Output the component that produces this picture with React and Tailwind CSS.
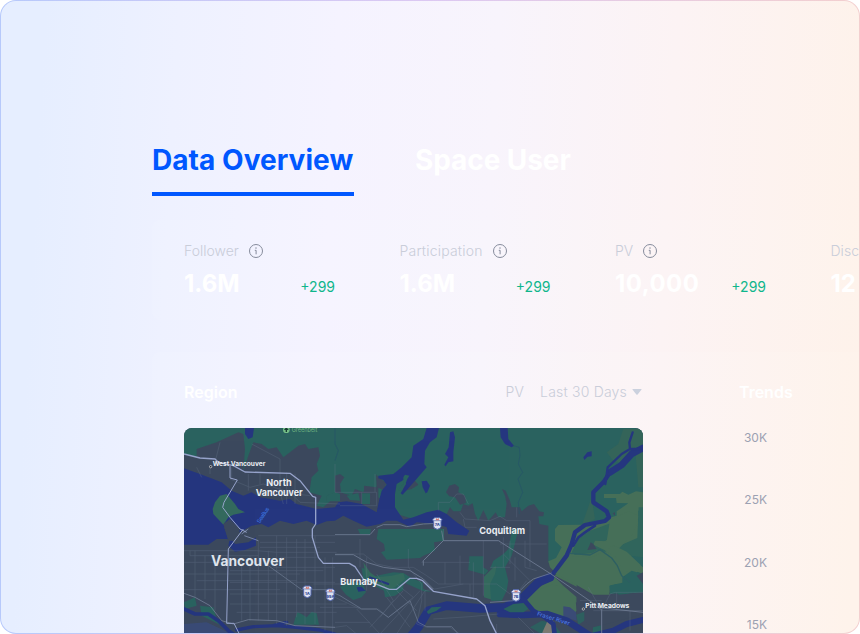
import React from "react";

function InfoIcon() {
  return (
    <svg width="16" height="16" viewBox="0 0 16 16" fill="none" className="shrink-0">
      <circle cx="8" cy="8" r="6.5" stroke="#868c9c" strokeWidth="1" />
      <path d="M6.8 7.3h1.3v4" stroke="#868c9c" strokeWidth="1" />
      <rect x="7.4" y="4.4" width="1.2" height="1.3" fill="#868c9c" />
    </svg>
  );
}

function Stat({ label, value, delta, labelClass = "tracking-[0.05px]", valueClass = "" }) {
  return (
    <div className="w-[215.5px] shrink-0">
      <div className="flex h-5 items-center gap-[9px]">
        <span className={`text-[14px] leading-5 font-light text-[#c9cdd9] ${labelClass}`}>{label}</span>
        {delta && <InfoIcon />}
      </div>
      <div className="mt-[7px] flex w-[151px] items-end justify-between">
        <span className={`text-[24px] leading-8 font-bold text-white ${valueClass}`}>{value}</span>
        {delta && <span className="mb-[3px] text-[14px] leading-5 text-[#10b68b]">{delta}</span>}
      </div>
    </div>
  );
}

function Shield({ x, y, label }) {
  return (
    <g transform={`translate(${x} ${y})`}>
      <path d="M-14 -11L-8 -17H8L14 -11L11 -5V10Q11 15 0 18Q-11 15 -11 10V-5Z" fill="#dfe3f1" stroke="#5367ad" strokeWidth="3" />
      <path d="M-12 -8H12" stroke="#5367ad" strokeWidth="2" />
      <path d="M-5 -9L-3 -16L0 -12L4 -16L5 -9Z" fill="#cf7770" />
      <text x="0" y="9" textAnchor="middle" fontSize="12" fontWeight="800" fill="#344b95">{label}</text>
    </g>
  );
}

const localRoads = [
  "M12 380H230L290 385H470", "M30 380V395H235", "M12 415H150", "M12 450H360", "M50 470H350", "M12 497H300",
  "M45 380V520", "M75 395V525", "M105 415V560", "M185 400V590", "M210 395V590", "M235 350V590", "M265 380V590",
  "M290 335V600", "M320 340V605", "M350 345V580", "M375 345V600", "M405 335V600", "M435 400V620", "M458 400V630",
  "M150 440H430", "M150 475H465", "M150 510H360", "M150 540H500", "M170 565H470", "M235 335H465", "M240 355H465", "M240 370H420",
  "M300 400H410", "M280 430H465", "M400 480H530", "M420 550H540", "M465 595H570",
  "M465 120V205M465 205H590V245H480", "M585 205V150", "M545 205V240",
  "M50 130L65 160M90 125V150M120 55L105 115M155 130V165M215 60L300 105V205L310 240M320 145V240M345 150V240",
  "M150 165L210 190L250 180L330 205L360 235L480 240", "M205 150V200M240 150V180M260 200L390 215",
  "M465 390H550L590 420L640 430H700L740 455L775 480", "M685 375V430L725 480V530", "M725 415H870", "M725 415L770 370L790 350V315",
  "M840 395V480M795 415V480M910 350V515M880 415V520M870 480V520", "M775 480H950L990 510", "M790 350H930",
  "M540 345V430M560 400V500M590 450L640 530L600 580", "M465 520L540 555H595L625 580L700 520L650 480",
  "M570 610L670 500M600 630L720 500M650 630L735 500M530 555L600 630M620 520L690 610M650 500L710 560",
  "M465 610L500 605L530 630M725 530L710 600L740 610H810L840 630M760 585L870 578L955 570", "M735 560V500L850 480",
  "M775 260V235H810L830 210H850L865 240M840 265L855 285L930 290M850 285L855 310H890",
  "M930 290L960 277L980 290H1050V315M1010 250V280M970 340V430M990 350V420M1035 350V430L1070 440M1050 315V430M1005 400V470",
  "M930 350H960M960 360H1100M970 390L1050 470M930 430H990M950 600V630M1015 580L1065 630M1020 495L1040 470",
  "M1265 560L1290 510L1305 505H1389M1265 560V630M1225 490L1265 560H1389M1240 560H1389M1310 505V560M1350 560V620M1200 530H1265",
];

function RegionMap() {
  return (
    <svg
      viewBox="12 12 1377 618"
      preserveAspectRatio="none"
      className="block h-[206px] w-[459px] rounded-t-[8px] font-['Inter',sans-serif]"
    >
      <rect x="12" y="12" width="1377" height="618" fill="#3c495d" />

      {/* northern forest */}
      <path
        fill="#2a625f"
        d="M12 12H1389V450L1370 505L1320 515L1280 480L1230 420L1130 445L1105 415V305L1078 300L1075 277L1090 277L1092 265L1078 262L1062 240L1045 245L1025 262L1020 250H995L990 230L977 200L966 195L975 215L980 240L975 280H955L947 265L925 290L910 258L895 290L885 270L878 238L865 245L850 240L842 262H820L810 250L795 280L780 265L700 285L650 270L595 220V175L585 200L555 190L550 205L525 195L515 215L480 205L430 250L410 245L425 215L388 205L395 160L415 140L410 120L420 95L415 70L385 75L375 60L355 65L330 85L310 100L290 70L265 75L245 60L220 55L205 95L190 140L195 75L190 30L175 25L110 55L50 75V100L12 90Z"
      />
      <path
        fill="#3c495d"
        d="M798 205L808 185L825 180L837 190L835 205L855 215L858 237L840 242L825 220L808 217ZM465 155L480 150L493 160L480 180L483 205L465 210ZM552 185L590 190V205L575 210L572 245H545L552 210ZM588 152L610 170L620 178L610 198L590 190ZM665 190L705 170L715 182L695 195L675 200Z"
      />
      <path fill="#2a625f" d="M546 208H570V240H546ZM500 215L535 207L540 230L510 228ZM440 215L465 205L480 210V232H440Z" />

      {/* inland parks */}
      <path fill="#2a625f" d="M595 315H792V350L762 355L765 380L730 395L720 402L620 407L603 385L615 380L612 360L590 345ZM533 315H573L570 332L540 330ZM868 397H910V430L925 440L915 452L865 438ZM345 585L352 565L365 570L380 580L395 563L410 568L417 602H340ZM12 535L45 520L50 545L15 555ZM60 545L100 550L110 585L125 605L65 575ZM480 490L505 470L550 480L558 505L545 520L520 528L498 512ZM545 432L560 435L575 460L590 455L640 445L670 447L700 465L728 475L730 495L755 503L730 502L670 475L670 498L645 515L615 520L612 500L590 488L550 465Z" />
      <path fill="#34695d" d="M550 415L570 445L590 460L635 455L670 447L675 465L645 490L625 497L560 470ZM912 458L950 420L945 530L912 520Z" />
      <path fill="#29635f" d="M997 315H1015L1003 365L995 395L975 430L985 470L980 500L965 530H933L930 480L945 450L950 425L930 435L940 410L970 390L985 375ZM1240 590H1262V630H1238Z" />

      {/* farmland */}
      <path
        fill="#466f58"
        d="M1125 315L1135 303L1205 302L1265 290L1285 282L1310 275V262L1345 238L1310 237L1308 222H1272V210H1320L1327 203L1345 212L1368 202L1389 205V260H1375V360L1365 385L1350 400L1389 430V450L1350 435L1365 480H1290L1288 505H1240L1215 490L1190 480L1190 535L1120 545L1045 545L1040 520L1060 505L1130 450L1110 430L1105 412L1128 402L1145 370L1125 350Z"
      />
      <path fill="#346459" d="M1330 15H1389V190H1375L1365 70L1340 120L1300 110L1280 85L1315 60ZM1235 220L1245 285L1205 305Z" />
      {/* wooded strip between the river and the fields */}
      <path fill="#30655c" d="M1175 385L1195 345L1230 320L1285 300L1300 295L1285 345L1262 360L1280 385L1252 378L1235 388L1185 392Z" />
      <path fill="#30655c" d="M1330 360L1372 342L1376 250H1389V400L1350 395L1325 378L1300 385L1278 372Z" />
      <path fill="#466f58" d="M1290 288L1345 262L1375 275L1372 300L1355 335L1335 355L1318 372L1278 380L1240 362L1245 350L1280 352Z" />
      <path fill="#466f58" d="M1275 381L1300 364L1340 383L1382 423L1370 448L1345 445L1322 425L1308 400Z" />
      <path fill="#466f58" d="M1120 446L1165 396L1235 400L1265 385L1300 412L1316 438L1327 475L1290 485L1288 512H1240L1190 483Z" />
      <path fill="#2a625f" d="M1327 460L1355 440L1389 450V510L1345 505L1290 510L1288 485L1327 476Z" />
      <path fill="#3c495d" d="M1232 355L1240 360L1250 375L1222 378L1228 365ZM1298 268L1305 265V275Z" />
      <path fill="#466f58" d="M1045 520L1070 500L1115 482L1160 490L1185 510L1190 560L1170 583L1100 575L1060 560Z" />
      <path fill="#3c495d" d="M1115 450L1150 468L1190 488L1245 515L1285 515L1389 505V570L1300 595L1240 610L1190 575V520L1150 485ZM1370 455L1389 445V480Z" />
      <path fill="#2d5f5f" d="M1188 572L1213 563V590L1195 602ZM1050 610L1085 590L1120 598L1145 630H1085Z" />
      <path fill="#3a4b76" d="M1150 547L1170 550L1188 565L1190 590L1150 578ZM12 600L80 595L155 630H12Z" />
      <path fill="#7c7971" d="M1102 592H1122V630H1085Z" />

      {/* Burrard Inlet and Indian Arm */}
      <path
        fill="#25367f"
        d="M12 133L60 150L125 175L155 200L190 215L215 205L240 220L300 230L330 225L350 240L410 255L465 250L475 235L500 232L545 240L590 265L597 230L605 200L620 182L610 168L595 163V155L640 150L665 130L695 100L700 65L730 45L740 12H777L770 40L750 55L735 80L733 120L740 130L705 170L668 212L662 208L678 180L675 165L650 180L645 210L645 250L670 287L700 280L740 265L775 257L800 270L830 295L868 320L860 335L805 330L800 310L770 300L710 295L690 308L650 290L620 290L600 300L560 308L520 290L490 275L465 290L440 292L410 303L380 290L340 300L300 290L265 310L245 300L215 305L180 325L150 300L132 310L145 345L110 345L85 362H12ZM150 340L165 360L205 355L228 340L228 365L195 378L165 383L145 365ZM195 12H222L218 40L205 45L195 30ZM810 25L820 22L825 40L820 85L820 112L805 115L797 127L793 122L805 100L795 90L806 70ZM725 172L740 170L750 185L742 205L737 208L728 190ZM960 12H983L985 45L1002 65L995 70L975 60L962 40ZM1210 100L1222 85L1235 82V97L1223 98L1213 108ZM530 490L545 488L557 500L535 503Z"
      />
      <path fill="#2a625f" d="M670 160L675 152L688 155L682 165L672 190L665 200L655 198L670 180Z" />
      <path fill="#34695d" d="M105 235L120 215L140 210L165 240L175 255L195 265L160 272L145 280L130 302L100 270L98 255Z" />
      <path fill="#3c495d" d="M130 300L150 285L180 315L170 350L145 350Z" />

      {/* rivers */}
      <g fill="none" stroke="#25367f" strokeLinejoin="round" strokeLinecap="round">
        <path d="M1389 72L1355 85L1325 120L1290 145L1270 175L1240 205L1240 235L1280 262L1287 280L1275 291L1215 303L1185 325L1175 360L1160 395L1130 435L1110 460" strokeWidth="13" />
        <path d="M1389 72L1355 90L1325 123L1290 145" strokeWidth="20" />
        <path d="M1276 180L1283 130L1325 90L1350 75L1380 75M1350 75L1348 55L1358 25" strokeWidth="7" />
        <path d="M1180 365L1195 340L1215 325L1245 305" strokeWidth="8" />
        <path d="M1170 388L1230 393L1260 377L1295 402L1312 425L1325 455L1350 475" strokeWidth="4" stroke="#2d5f62" />
        <path d="M1110 460L1075 475L1045 505L1020 530L975 550L900 553L800 545L745 560L715 610L690 640" strokeWidth="26" />
        <path d="M960 570L1030 573L1100 570L1160 590L1230 635" strokeWidth="20" />
        <path d="M1030 525L1060 560L1095 580L1120 600L1125 640" strokeWidth="14" />
        <path d="M1240 635L1300 620L1340 600L1389 588" strokeWidth="18" />
        <path d="M12 555L45 570L85 570L115 590L145 620L160 630" strokeWidth="11" />
        <path d="M170 618L220 608L290 605L350 610L420 618L465 630M280 605L320 595" strokeWidth="10" />
        <path d="M570 460L625 480" strokeWidth="6" />
      </g>
      <path fill="#2a625f" d="M970 555L1000 540L1030 537L1045 555L1030 565L990 565ZM740 563L755 550L785 548L770 560L745 570Z" />
      <path fill="none" stroke="#255369" strokeWidth="2" d="M1000 65L1018 70L1020 95L1015 120L1028 145L1014 165L1028 205L1015 235L1018 270M465 12V60L475 80L465 110" />

      {/* streets */}
      <g fill="none" stroke="#6b788f" strokeWidth="2" opacity="0.42">
        {localRoads.map((d) => (
          <path key={d} d={d} />
        ))}
      </g>
      <g fill="none" stroke="#727f97" strokeWidth="2.4" strokeLinejoin="round">
        <path d="M265 425L300 450L365 497H440L480 515L545 555H590L625 580L690 530L715 595L740 608H815L835 630" opacity="0.8" />
        <path d="M590 310L610 302L660 302L680 308L730 300L770 298" />
        <path d="M785 320L790 350L765 375L730 410V425M790 350H955L1110 448L1250 545L1262 556" />
        <path d="M1020 500L1040 480L1060 465L1115 447M12 508L45 520L90 545L125 590L160 600L205 587L290 590L345 605L465 610" />
        <path d="M1250 550L1389 565M1265 555V630M930 535L1000 530" />
        <path d="M465 332H570L585 315M465 392H520L560 415L610 430L690 440L730 465L760 495" />
      </g>
      <g fill="none" stroke="#96a3cb" strokeWidth="4" strokeLinejoin="round">
        <path d="M12 90L60 102L105 105L115 115L160 125L195 144L330 148L360 170L398 217L407 220V300L397 315V340L415 400L430 418H508L525 428L550 465L600 485L628 496H650L690 463H710L728 470L760 502L890 525L915 545L930 590L950 630" />
        <path d="M150 125V162L172 168L150 205L132 235L128 250L150 280L180 315L200 325M190 315L145 375L140 598H162L178 630" strokeWidth="3" />
        <path d="M185 330L205 315M193 335L235 350" strokeWidth="2" />
      </g>

      {/* labels */}
      <g fill="#eceff4" fontWeight="700">
        <circle cx="92" cy="128" r="3.5" fill="#20242c" stroke="#e8e8e8" strokeWidth="2" />
        <text x="98" y="126" fontSize="19" textLength="158" lengthAdjust="spacingAndGlyphs">West Vancouver</text>
        <text x="259" y="186" fontSize="28" textLength="76" lengthAdjust="spacingAndGlyphs">North</text>
        <text x="227" y="215" fontSize="28" textLength="141" lengthAdjust="spacingAndGlyphs">Vancouver</text>
        <text x="93" y="425" fontSize="43" textLength="219" lengthAdjust="spacingAndGlyphs" fill="#dfe4ec">Vancouver</text>
        <text x="481" y="482" fontSize="28" textLength="112" lengthAdjust="spacingAndGlyphs">Burnaby</text>
        <text x="898" y="330" fontSize="28" textLength="137" lengthAdjust="spacingAndGlyphs">Coquitlam</text>
        <circle cx="1210" cy="555" r="3.5" fill="#20242c" stroke="#e8e8e8" strokeWidth="2" />
        <text x="1216" y="551" fontSize="19" textLength="132" lengthAdjust="spacingAndGlyphs">Pitt Meadows</text>
      </g>
      <circle cx="319" cy="17" r="10" fill="#74bd86" />
      <path d="M319 9L312 18H317V24H321V18H326Z" fill="#173c34" />
      <text x="335" y="23" fontSize="17" fill="#72b883" textLength="77" lengthAdjust="spacingAndGlyphs">Greenbelt</text>
      <text transform="translate(239 299) rotate(-56)" fontSize="17" fontWeight="500" fill="#3a70dc" textLength="53">SeaBus</text>
      <text transform="translate(1070 574) rotate(17)" fontSize="17" fontWeight="500" fill="#527fe0" textLength="102">Fraser River</text>

      <Shield x={772} y={298} label="7A" />
      <Shield x={382} y={503} label="1A" />
      <Shield x={451} y={512} label="99A" />
      <Shield x={1008} y={514} label="7B" />
    </svg>
  );
}

export default function App() {
  return (
    <div className="h-[634px] w-[860px] overflow-hidden rounded-[16px] bg-linear-to-r from-[#b7c9fb] via-[#dcc8f2] to-[#f3cfcf] p-px font-['Inter',sans-serif]">
      <div className="h-full w-full overflow-hidden rounded-[15px] bg-[linear-gradient(93deg,#e6eeff_5%,#eef1ff_20%,#f5f3ff_38%,#f8f4fc_56%,#fcf3f4_76%,#fef2ea_99%)] pt-[139px] pl-[151px]">
        <nav className="flex h-14 gap-[61px] text-[28px] leading-10 font-bold">
          <div className="h-14 w-[202px] border-b-4 border-[#0057ff] tracking-[0.05px] whitespace-nowrap text-[#0057ff]">Data Overview</div>
          <div className="tracking-[-0.08px] whitespace-nowrap text-white">Space User</div>
        </nav>

        <section className="mt-6 flex h-[100px] w-[1000px] rounded-[8px] bg-white/5 pt-[21px] pl-8">
          <Stat label="Follower" value="1.6M" delta="+299" labelClass="tracking-[0px]" />
          <Stat label="Participation" value="1.6M" delta="+299" labelClass="tracking-[0.2px]" />
          <Stat label="PV" value="10,000" delta="+299" valueClass="tracking-[0.45px]" />
          <Stat label="Disc" value="12" />
        </section>

        <section className="mt-8 flex h-[300px] w-[1000px] rounded-[8px] bg-white/5 pt-[30px] pl-8">
          <div className="w-[459px] shrink-0">
            <div className="flex h-5 items-center text-[14px] leading-5 text-[#c9cdd9]">
              <h2 className="text-[16px] font-semibold text-white">Region</h2>
              <span className="ml-auto font-light tracking-[0.2px]">PV</span>
              <span className="ml-4 font-light tracking-[0.2px]">Last 30 Days</span>
              <svg width="10" height="6" viewBox="0 0 10 6" className="mr-px ml-[5px]">
                <path d="M1 0H9Q10 0 9.4 .8L5.6 5.5Q5 6.2 4.4 5.5L.6 .8Q0 0 1 0Z" fill="#cbd1de" />
              </svg>
            </div>
            <div className="mt-[26px]">
              <RegionMap />
            </div>
          </div>
          <div className="ml-24">
            <h2 className="text-[16px] leading-5 font-semibold text-white">Trends</h2>
            <div className="mt-[26px] flex w-7 flex-col gap-[42.3px] text-right text-[12px] leading-5 text-[#9ca1b2]">
              <span>30K</span>
              <span>25K</span>
              <span>20K</span>
              <span>15K</span>
            </div>
          </div>
        </section>
      </div>
    </div>
  );
}
